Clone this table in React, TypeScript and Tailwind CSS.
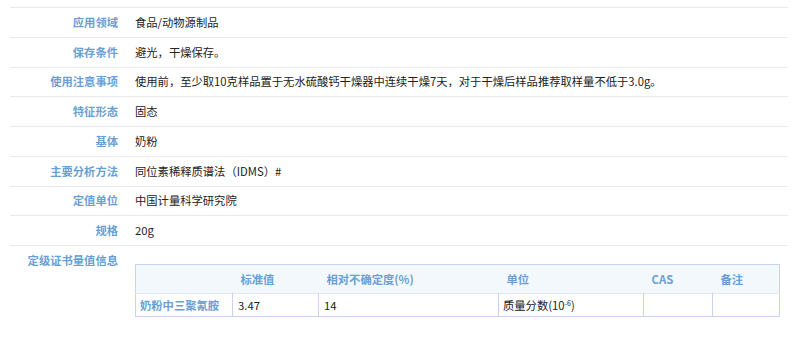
import React from "react";

const rows: [string, React.ReactNode][] = [
  ["应用领域", "食品/动物源制品"],
  ["保存条件", "避光，干燥保存。"],
  ["使用注意事项", "使用前，至少取10克样品置于无水硫酸钙干燥器中连续干燥7天，对于干燥后样品推荐取样量不低于3.0g。"],
  ["特征形态", "固态"],
  ["基体", "奶粉"],
  ["主要分析方法", "同位素稀释质谱法（IDMS）#"],
  ["定值单位", "中国计量科学研究院"],
  ["规格", "20g"],
];

export default function App() {
  return (
    <div
      className="w-[803px] h-[338px] bg-white pl-[10px] pr-[15px] pt-[7px] text-[11.3px] text-[#222]"
      style={{ fontFamily: '"Microsoft YaHei", "Noto Sans CJK SC", sans-serif' }}
    >
      {rows.map(([k, v]) => (
        <div key={k} className="flex h-[29.75px] items-center border-t border-[#e9e9e9]">
          <div className="w-[108px] shrink-0 text-right font-bold text-[#6a9fd4]">{k}</div>
          <div className="ml-[17px]">{v}</div>
        </div>
      ))}
      <div className="flex border-t border-[#e9e9e9]">
        <div className="w-[108px] shrink-0 pt-[6px] text-right font-bold text-[#6a9fd4]">定级证书量值信息</div>
        <div className="ml-[17px] mt-[18px]">
          <table className="w-[644px] table-fixed border-collapse border border-[#c9d2f2]">
            <colgroup>
              <col className="w-[97px]" />
              <col className="w-[86px]" />
              <col className="w-[180px]" />
              <col className="w-[145px]" />
              <col className="w-[69px]" />
              <col className="w-[67px]" />
            </colgroup>
            <thead>
              <tr className="h-[29px] bg-[#f3f8fd] text-left font-bold text-[#6a9fd4]">
                <th className="font-bold"></th>
                <th className="pl-[8px] font-bold">标准值</th>
                <th className="pl-[8px] font-bold">相对不确定度(%)</th>
                <th className="pl-[8px] font-bold">单位</th>
                <th className="pl-[8px] font-bold">CAS</th>
                <th className="pl-[8px] font-bold">备注</th>
              </tr>
            </thead>
            <tbody>
              <tr className="h-[23px] border-t border-[#e3e8f5]">
                <td className="border-r border-[#c9d2f2] pl-[4px] font-bold text-[#6a9fd4]">奶粉中三聚氰胺</td>
                <td className="border-r border-[#c9d2f2] pl-[5px]">3.47</td>
                <td className="border-r border-[#c9d2f2] pl-[5px]">14</td>
                <td className="border-r border-[#c9d2f2] pl-[4px]">
                  质量分数(10<sup className="text-[7px]">-6</sup>)
                </td>
                <td className="border-r border-[#c9d2f2]"></td>
                <td></td>
              </tr>
            </tbody>
          </table>
        </div>
      </div>
    </div>
  );
}
